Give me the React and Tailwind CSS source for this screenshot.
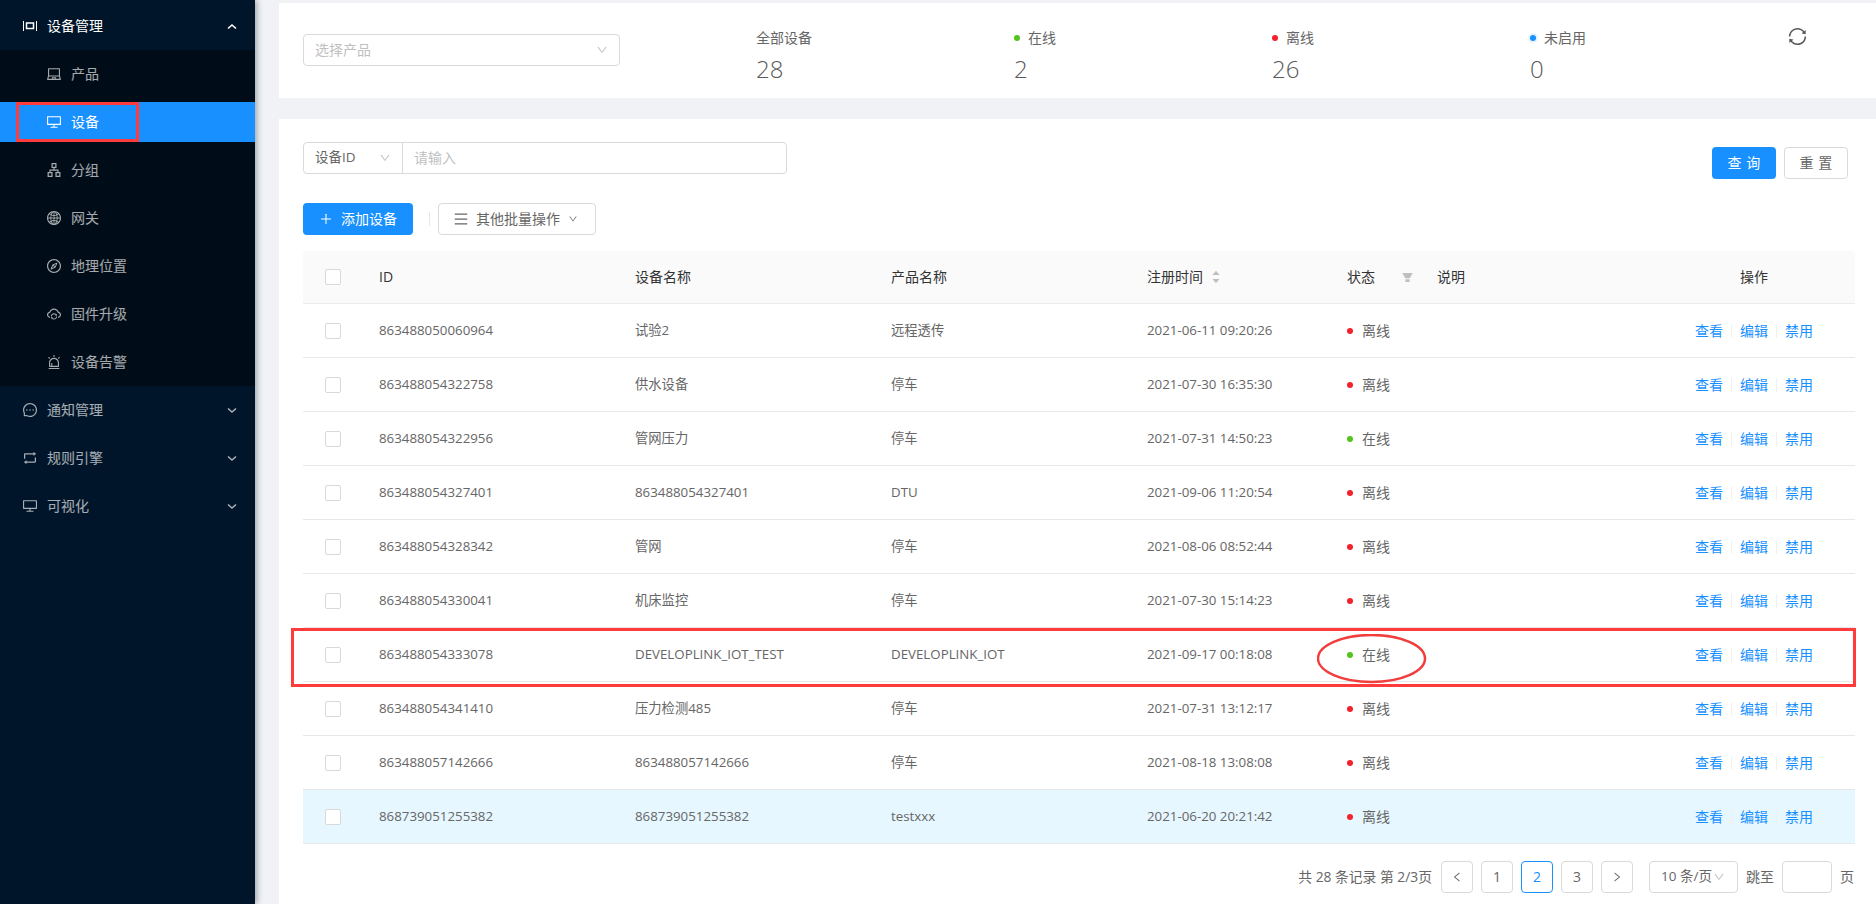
import React from "react";
import {
  AiOutlineLaptop,
  AiOutlineDesktop,
  AiOutlineApartment,
  AiOutlineGlobal,
  AiOutlineCompass,
  AiOutlineCloudSync,
  AiOutlineAlert,
  AiOutlineMessage,
  AiOutlineRetweet,
  AiOutlineSync,
  AiOutlineMenu,
  AiOutlinePlus,
  AiOutlineDown,
  AiOutlineLeft,
  AiOutlineRight,
  AiFillCaretUp,
  AiFillCaretDown,
  AiFillFilter,
} from "react-icons/ai";

const subMenu = [
  { label: "产品", icon: AiOutlineLaptop },
  { label: "设备", icon: AiOutlineDesktop, active: true },
  { label: "分组", icon: AiOutlineApartment },
  { label: "网关", icon: AiOutlineGlobal },
  { label: "地理位置", icon: AiOutlineCompass },
  { label: "固件升级", icon: AiOutlineCloudSync },
  { label: "设备告警", icon: AiOutlineAlert },
];

const topMenu = [
  { label: "通知管理", icon: AiOutlineMessage },
  { label: "规则引擎", icon: AiOutlineRetweet },
  { label: "可视化", icon: AiOutlineDesktop },
];

const stats = [
  { label: "全部设备", value: 28 },
  { label: "在线", value: 2, dot: "bg-[#52c41a]" },
  { label: "离线", value: 26, dot: "bg-[#f5222d]" },
  { label: "未启用", value: 0, dot: "bg-[#1890ff] ring-2 ring-[#1890ff]/10" },
];

const devices = [
  ["863488050060964", "试验2", "远程透传", "2021-06-11 09:20:26", false],
  ["863488054322758", "供水设备", "停车", "2021-07-30 16:35:30", false],
  ["863488054322956", "管网压力", "停车", "2021-07-31 14:50:23", true],
  ["863488054327401", "863488054327401", "DTU", "2021-09-06 11:20:54", false],
  ["863488054328342", "管网", "停车", "2021-08-06 08:52:44", false],
  ["863488054330041", "机床监控", "停车", "2021-07-30 15:14:23", false],
  ["863488054333078", "DEVELOPLINK_IOT_TEST", "DEVELOPLINK_IOT", "2021-09-17 00:18:08", true],
  ["863488054341410", "压力检测485", "停车", "2021-07-31 13:12:17", false],
  ["863488057142666", "863488057142666", "停车", "2021-08-18 13:08:08", false],
  ["868739051255382", "868739051255382", "testxxx", "2021-06-20 20:21:42", false],
];

const tableCols = "grid grid-cols-[60px_256px_256px_256px_200px_90px_232px_202px] items-center";

function Arrow({ up }) {
  return (
    <svg width="10" height="7" viewBox="0 0 10 7" fill="none" stroke="currentColor" strokeWidth="1.6" className="ml-auto">
      <path d={up ? "M1 5.5 L5 2 L9 5.5" : "M1 1.5 L5 5 L9 1.5"} />
    </svg>
  );
}

function Sidebar() {
  return (
    <div className="w-[255px] shrink-0 h-full bg-[#001529] shadow-[2px_0_6px_rgba(0,21,41,0.35)] z-20 text-sm">
      <div className="h-[50px] pt-[2px] pl-[23px] pr-[18px] flex items-center text-white">
        <svg width="14" height="10" viewBox="0 0 14 10" fill="none" stroke="currentColor" className="mr-[10px]">
          <path d="M0.5 0 V10 M13.5 0 V10" strokeWidth="1" />
          <rect x="3.5" y="2" width="7" height="5.5" strokeWidth="1.5" />
        </svg>
        <span>设备管理</span>
        <Arrow up />
      </div>
      <div className="bg-[#000c17] h-[336px] pt-1">
        {subMenu.map((item) => {
          const Icon = item.icon;
          return (
            <div
              key={item.label}
              className={
                "relative h-10 mb-2 pl-[46px] flex items-center " +
                (item.active ? "bg-[#1890ff] text-white" : "text-white/65")
              }
            >
              <Icon className="text-base mr-[9px]" />
              <span>{item.label}</span>
              {item.active && (
                <div className="absolute left-4 top-0 w-[123px] h-10 border-[3px] border-[#ff3b3b]" />
              )}
            </div>
          );
        })}
      </div>
      {topMenu.map((item) => {
        const Icon = item.icon;
        return (
          <div key={item.label} className="h-12 pl-[22px] pr-[18px] flex items-center text-white/65">
            <Icon className="text-base mr-[9px]" />
            <span>{item.label}</span>
            <Arrow />
          </div>
        );
      })}
    </div>
  );
}

function StatsCard() {
  return (
    <div className="mt-[3px] h-[95px] bg-white flex pl-6 shrink-0">
      <div className="w-[317px] h-8 mt-[31px] mr-[136px] border border-[#d9d9d9] rounded-sm px-[11px] flex items-center justify-between text-sm text-[#bfbfbf]">
        <span>选择产品</span>
        <AiOutlineDown className="text-xs" />
      </div>
      {stats.map((s) => (
        <div key={s.label} className="w-[258px] pt-6">
          <div className="h-[22px] flex items-center text-sm text-[#666]">
            {s.dot && <span className={"w-1.5 h-1.5 rounded-full mr-2 " + s.dot} />}
            {s.label}
          </div>
          <div className="mt-1 h-8 leading-8 text-2xl font-light text-[#595959]">{s.value}</div>
        </div>
      ))}
      <AiOutlineSync className="text-[21px] mt-[23px] -ml-[1px] text-[#595959]" />
    </div>
  );
}

function Toolbar() {
  return (
    <>
      <div className="flex justify-between pl-6 pr-7 pt-[23px]">
        <div className="w-[484px] h-8 border border-[#d9d9d9] rounded-sm flex text-sm">
          <div className="w-[99px] px-[11px] flex items-center justify-between border-r border-[#d9d9d9] text-[#666]">
            <span className="text-[13.5px]">设备ID</span>
            <AiOutlineDown className="text-xs text-[#bfbfbf]" />
          </div>
          <div className="flex-1 px-[11px] flex items-center text-[#bfbfbf]">请输入</div>
        </div>
        <div className="flex gap-2 mt-[5px] text-sm">
          <button className="w-16 h-8 rounded-sm bg-[#1890ff] text-white">
            <span className="tracking-[.34em] -mr-[.34em]">查询</span>
          </button>
          <button className="w-16 h-8 rounded-sm border border-[#d9d9d9] bg-white text-[#666]">
            <span className="tracking-[.34em] -mr-[.34em]">重置</span>
          </button>
        </div>
      </div>
      <div className="flex items-center pl-6 mt-6 text-sm">
        <button className="w-[110px] h-8 rounded-sm bg-[#1890ff] text-white flex items-center pl-4">
          <AiOutlinePlus className="text-sm mr-2" />
          添加设备
        </button>
        <div className="w-px h-[14px] bg-[#e8e8e8] ml-4 mr-2" />
        <button className="w-[158px] h-8 rounded-sm border border-[#d9d9d9] text-[#666] flex items-center pl-[14px]">
          <AiOutlineMenu className="text-base mr-[7px]" />
          其他批量操作
          <AiOutlineDown className="text-[10px] ml-2" />
        </button>
      </div>
    </>
  );
}

function Checkbox() {
  return <div className="w-4 h-4 mx-auto bg-white border border-[#d9d9d9] rounded-[2px]" />;
}

function Status({ online }) {
  return (
    <div className="flex items-center pl-4 text-sm text-[#666]">
      <span className={"w-1.5 h-1.5 rounded-full mr-[9px] " + (online ? "bg-[#52c41a]" : "bg-[#f5222d]")} />
      {online ? "在线" : "离线"}
    </div>
  );
}

function Actions() {
  const sep = <span className="w-px h-[14px] bg-[#f0f0f0] mx-2" />;
  return (
    <div className="flex items-center justify-center text-sm text-[#1890ff]">
      <span>查看</span>
      {sep}
      <span>编辑</span>
      {sep}
      <span>禁用</span>
    </div>
  );
}

function DeviceTable() {
  return (
    <div className="ml-6 mr-[21px] mt-4 text-[#666]">
      <div className={tableCols + " h-[53px] bg-[#fafafa] border-b border-[#ececec] rounded-t-sm text-sm text-[#333]"}>
        <Checkbox />
        <div className="pl-4">ID</div>
        <div className="pl-4">设备名称</div>
        <div className="pl-4">产品名称</div>
        <div className="pl-4 flex items-center">
          注册时间
          <span className="ml-2 flex flex-col text-[#bfbfbf] text-[10px] leading-none">
            <AiFillCaretUp className="-mb-[1px]" />
            <AiFillCaretDown className="-mt-[1px]" />
          </span>
        </div>
        <div className="pl-4 flex items-center">
          状态
          <AiFillFilter className="ml-[26px] text-[13px] text-[#bfbfbf]" />
        </div>
        <div className="pl-4">说明</div>
        <div className="text-center">操作</div>
      </div>
      {devices.map(([id, name, product, time, online], i) => (
        <div
          key={id}
          className={tableCols + " relative h-[54px] border-b border-[#e8e8e8] " + (i === 9 ? "bg-[#e6f7ff]" : "bg-white")}
        >
          <Checkbox />
          <div className="pl-4 text-[13.3px]">{id}</div>
          <div className="pl-4 text-[13.3px]">{name}</div>
          <div className="pl-4 text-[13.3px]">{product}</div>
          <div className="pl-4 text-[13.3px]">{time}</div>
          <Status online={online} />
          <div />
          <Actions />
          {i === 6 && (
            <>
              <div className="absolute -left-3 -right-px top-0 -bottom-1.5 border-[3px] border-[#ff3b3b] z-10" />
              <svg className="absolute left-[1014px] top-[6px] z-10" width="110" height="50" viewBox="0 0 110 50" fill="none">
                <ellipse cx="54.5" cy="24.5" rx="53.5" ry="23.5" stroke="#f23d3d" strokeWidth="2.5" />
              </svg>
            </>
          )}
        </div>
      ))}
    </div>
  );
}

function PageBox({ children, current }) {
  return (
    <div
      className={
        "w-8 h-8 rounded-sm border flex items-center justify-center " +
        (current ? "border-[#1890ff] text-[#1890ff]" : "border-[#d9d9d9] text-[#666]")
      }
    >
      {children}
    </div>
  );
}

function Pagination() {
  return (
    <div className="mt-[17px] mr-[22px] flex items-center justify-end text-sm text-[#666]">
      <span className="mr-[9px] text-[13.8px]">共 28 条记录 第 2/3页</span>
      <div className="flex gap-2">
        <PageBox>
          <AiOutlineLeft className="text-xs" />
        </PageBox>
        <PageBox>1</PageBox>
        <PageBox current>2</PageBox>
        <PageBox>3</PageBox>
        <PageBox>
          <AiOutlineRight className="text-xs" />
        </PageBox>
      </div>
      <div className="ml-4 w-[89px] h-8 border border-[#d9d9d9] rounded-sm pl-[11px] flex items-center">
        <span className="text-[13.5px] whitespace-nowrap">10 条/页</span>
        <AiOutlineDown className="text-xs text-[#bfbfbf] ml-px" />
      </div>
      <span className="ml-2">跳至</span>
      <div className="w-[50px] h-8 mx-2 border border-[#d9d9d9] rounded-sm" />
      <span>页</span>
    </div>
  );
}

export default function App() {
  return (
    <div className="flex h-screen w-full overflow-hidden bg-[#f0f2f5] font-['Open_Sans','Noto_Sans_CJK_SC',sans-serif]">
      <Sidebar />
      <div className="flex-1 flex flex-col ml-6 min-w-0">
        <StatsCard />
        <div className="mt-[21px] flex-1 bg-white">
          <Toolbar />
          <DeviceTable />
          <Pagination />
        </div>
      </div>
    </div>
  );
}
